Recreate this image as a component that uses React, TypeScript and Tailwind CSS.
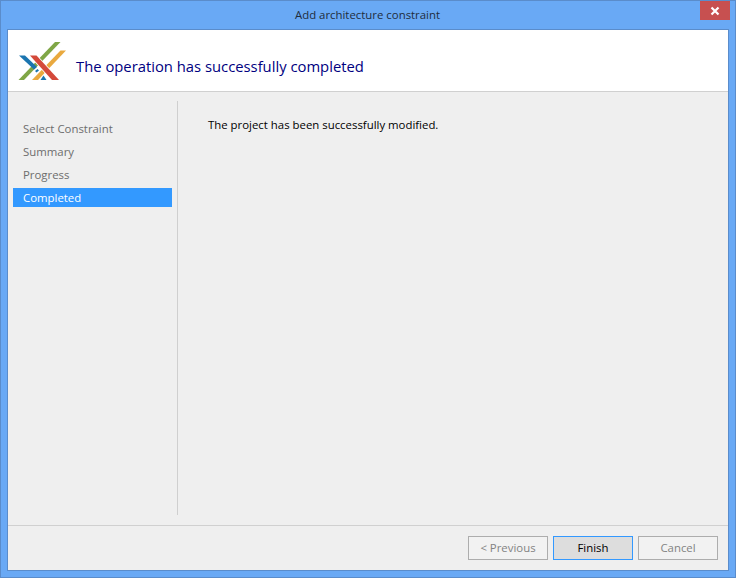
const FONT = { fontFamily: '"Open Sans", "Noto Sans", sans-serif' };

const STEPS = ["Select Constraint", "Summary", "Progress", "Completed"];

function Logo() {
  return (
    <svg width="50" height="42" viewBox="18 40 50 42" className="shrink-0">
      <polygon points="18.5,79 24,79 60.5,41 55,41" fill="#7fa646" />
      <polygon points="32,79 38,79 66,49.5 60.5,49.5" fill="#e9a93f" />
      <polygon points="19,54.5 25,54.5 37,66 34,68.5" fill="#1b75b0" />
      <polygon
        points="30,54.5 36.5,54.5 59,79 52,79"
        fill="#d4493a"
        stroke="#ffffff"
        strokeWidth="1.6"
        paintOrder="stroke"
      />
      <polygon points="35,70 37.5,68 39,69.5 36.5,71.5" fill="#1b75b0" />
      <polygon points="40.5,79 46.5,79 43.5,74.5" fill="#1b75b0" />
    </svg>
  );
}

function WizardButton({ label, primary }: { label: string; primary?: boolean }) {
  return (
    <button
      type="button"
      className={`w-20 h-6 border text-[11.4px] ${
        primary
          ? "border-[#3399ff] bg-[#dddddd] text-black"
          : "border-[#adadad] bg-[#f2f2f2] text-[#838383]"
      }`}
    >
      {label}
    </button>
  );
}

export default function App() {
  return (
    <div
      className="w-[736px] h-[578px] flex flex-col bg-[#69a9f5] border border-[#5a8ccb] overflow-hidden"
      style={FONT}
    >
      {/* Title bar */}
      <div className="h-[28px] shrink-0 flex pr-[5px]">
        <div className="flex-1 pl-[34px] pt-[5px] text-center text-[11.4px] text-[#1f2d3d]">
          Add architecture constraint
        </div>
        <div className="w-[30px] h-[19px] bg-[#c75050] flex items-center justify-center">
          <svg width="10" height="10" viewBox="0 0 10 10">
            <path d="M1.5 1.5 L8.5 8.5 M8.5 1.5 L1.5 8.5" stroke="#ffffff" strokeWidth="2.2" />
          </svg>
        </div>
      </div>

      {/* Dialog body */}
      <div className="mx-[6px] mb-[6px] flex-1 flex flex-col border border-[#5a8ccb] bg-[#efefef] min-h-0">
        <div className="h-[62px] shrink-0 bg-white border-b border-[#d0d0d0] flex items-center pl-[10px] pt-[3px] gap-2">
          <Logo />
          <span className="text-[14.8px] pt-[9px] text-[#000080]">The operation has successfully completed</span>
        </div>

        <div className="flex-1 flex min-h-0 pt-[9px] pb-[10px]">
          <div className="w-[170px] shrink-0 border-r border-[#cfcfcf] pl-[5px] pr-[5px] pt-[18px] flex flex-col gap-1">
            {STEPS.map((step) => (
              <div
                key={step}
                className={`h-[19px] pl-[10px] text-[11.4px] leading-[19px] ${
                  step === "Completed" ? "bg-[#3399ff] text-white" : "text-[#6d6d6d]"
                }`}
              >
                {step}
              </div>
            ))}
          </div>
          <div className="flex-1 pl-[30px] pt-[15px] text-[11.4px] text-black">
            The project has been successfully modified.
          </div>
        </div>

        <div className="h-[45px] shrink-0 border-t border-[#d0d0d0] flex justify-end items-start gap-[5px] pt-[10px] pr-[10px]">
          <WizardButton label="< Previous" />
          <WizardButton label="Finish" primary />
          <WizardButton label="Cancel" />
        </div>
      </div>
    </div>
  );
}
